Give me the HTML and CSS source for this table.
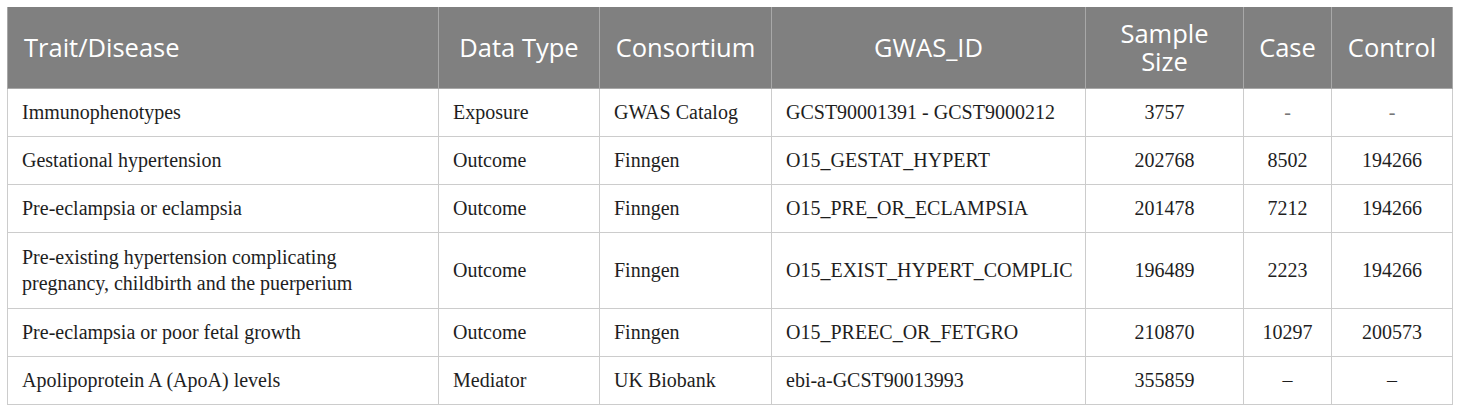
FILE: index.html
```html
<!DOCTYPE html>
<html>
<head>
<meta charset="utf-8">
<link rel="stylesheet" href="styles.css">
</head>
<body>
<table class="data-table">
  <colgroup>
    <col class="c-trait"><col class="c-type"><col class="c-cons"><col class="c-gwas"><col class="c-size"><col class="c-case"><col class="c-ctrl">
  </colgroup>
  <thead>
    <tr>
      <th class="left">Trait/Disease</th>
      <th>Data Type</th>
      <th>Consortium</th>
      <th>GWAS_ID</th>
      <th>Sample<br>Size</th>
      <th>Case</th>
      <th>Control</th>
    </tr>
  </thead>
  <tbody>
    <tr>
      <td>Immunophenotypes</td><td>Exposure</td><td>GWAS Catalog</td><td>GCST90001391 - GCST9000212</td>
      <td class="num">3757</td><td class="num dash">-</td><td class="num dash">-</td>
    </tr>
    <tr>
      <td>Gestational hypertension</td><td>Outcome</td><td>Finngen</td><td>O15_GESTAT_HYPERT</td>
      <td class="num">202768</td><td class="num">8502</td><td class="num">194266</td>
    </tr>
    <tr>
      <td>Pre-eclampsia or eclampsia</td><td>Outcome</td><td>Finngen</td><td>O15_PRE_OR_ECLAMPSIA</td>
      <td class="num">201478</td><td class="num">7212</td><td class="num">194266</td>
    </tr>
    <tr class="tall">
      <td>Pre-existing hypertension complicating<br>pregnancy, childbirth and the puerperium</td><td>Outcome</td><td>Finngen</td><td>O15_EXIST_HYPERT_COMPLIC</td>
      <td class="num">196489</td><td class="num">2223</td><td class="num">194266</td>
    </tr>
    <tr>
      <td>Pre-eclampsia or poor fetal growth</td><td>Outcome</td><td>Finngen</td><td>O15_PREEC_OR_FETGRO</td>
      <td class="num">210870</td><td class="num">10297</td><td class="num">200573</td>
    </tr>
    <tr>
      <td>Apolipoprotein A (ApoA) levels</td><td>Mediator</td><td>UK Biobank</td><td>ebi-a-GCST90013993</td>
      <td class="num">355859</td><td class="num">–</td><td class="num">–</td>
    </tr>
  </tbody>
</table>
</body>
</html>
```
FILE: styles.css
```css
html, body {
  margin: 0;
  padding: 0;
  background: #ffffff;
}
body {
  padding: 7px 0 0 7px;
}
.data-table {
  border-collapse: collapse;
  table-layout: fixed;
  width: 1445px;
}
.c-trait { width: 431px; }
.c-type { width: 161px; }
.c-cons { width: 172px; }
.c-gwas { width: 314px; }
.c-size { width: 158px; }
.c-case { width: 88px; }
.c-ctrl { width: 121px; }

.data-table th {
  background: #808080;
  color: #ffffff;
  font-family: "Open Sans", "Noto Sans", sans-serif;
  font-weight: 400;
  font-size: 25.5px;
  line-height: 28px;
  height: 81px;
  padding: 0 4px;
  text-align: center;
  vertical-align: middle;
  border: 1px solid #a8a8a8;
  border-top: none;
  box-sizing: border-box;
}
.data-table th.left {
  text-align: left;
  padding-left: 16px;
}
.data-table td {
  font-family: "Liberation Serif", "Times New Roman", serif;
  font-size: 20px;
  line-height: 26px;
  color: #1e1e1e;
  height: 48px;
  padding: 0 14px;
  border: 1px solid #cccccc;
  vertical-align: middle;
  text-align: left;
  box-sizing: border-box;
}
.data-table tr.tall td {
  height: 76px;
}
.data-table td.num {
  text-align: center;
}
.data-table td.dash {
  color: #777777;
}
```
